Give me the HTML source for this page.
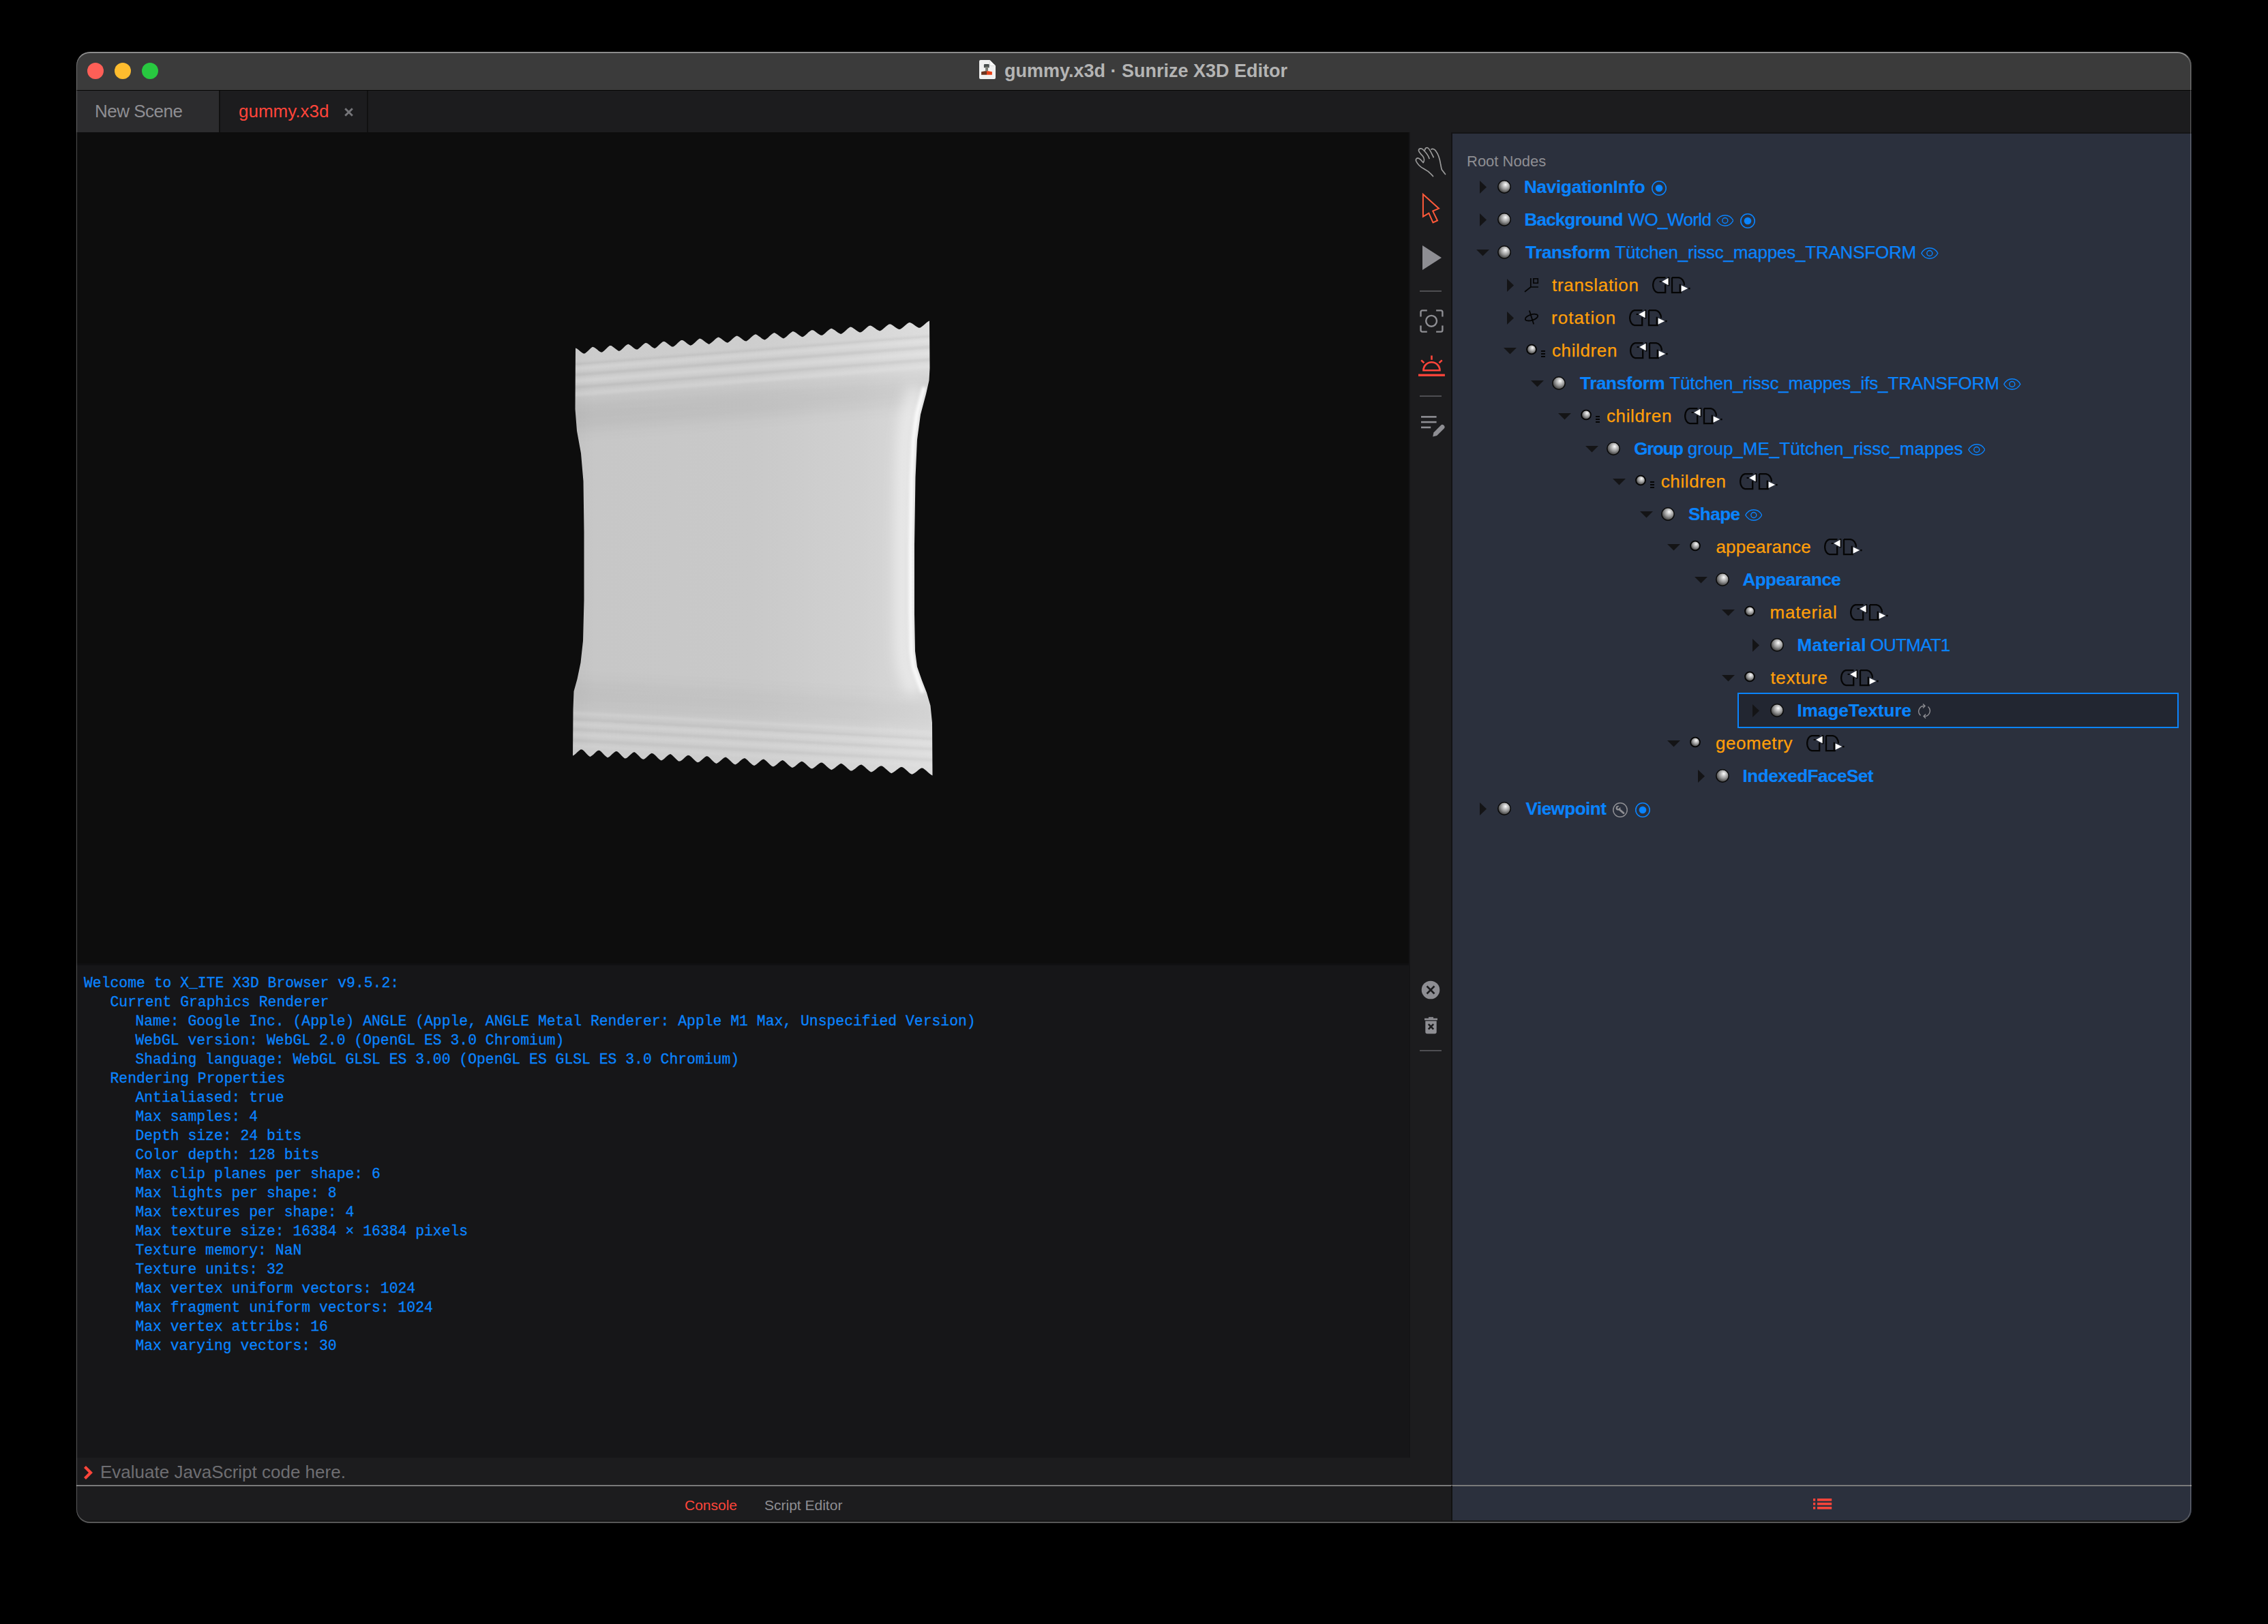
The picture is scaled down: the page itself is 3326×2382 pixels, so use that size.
<!DOCTYPE html>
<html><head><meta charset="utf-8">
<style>
html,body{margin:0;padding:0;background:#000;width:3326px;height:2382px;overflow:hidden;font-family:"Liberation Sans",sans-serif;}
.a{position:absolute;}
#win{position:absolute;left:112px;top:76px;width:3102px;height:2158px;border-radius:20px;overflow:hidden;background:#1c1c1e;}
#pg{position:absolute;left:-112px;top:-76px;width:3326px;height:2382px;}
#winborder{position:absolute;left:112px;top:76px;width:3099px;height:2153.5px;border-radius:20px;border:1.5px solid rgba(255,255,255,0.27);border-top:2px solid rgba(255,255,255,0.42);border-bottom:2px solid #575757;pointer-events:none;}
.mono{font-family:"Liberation Mono",monospace;font-size:21.4px;color:#0a84ff;white-space:pre;line-height:28px;-webkit-text-stroke:0.3px #0a84ff;}
.row{position:absolute;height:48px;white-space:nowrap;font-size:26px;line-height:48px;}
.ic{display:inline-block;}
.tn{color:#0a84ff;font-weight:bold;-webkit-text-stroke:0.2px #0a84ff;}
.nn{color:#0a84ff;-webkit-text-stroke:0.25px #0a84ff;}
.fn{color:#ff9f0a;-webkit-text-stroke:0.25px #ff9f0a;}
</style></head><body>
<svg width="0" height="0" style="position:absolute">
  <defs>
    <radialGradient id="bg" cx="0.58" cy="0.38" r="0.62" fx="0.6" fy="0.32">
      <stop offset="0" stop-color="#ffffff"/>
      <stop offset="0.18" stop-color="#dcdcdc"/>
      <stop offset="0.55" stop-color="#9a9a9a"/>
      <stop offset="0.85" stop-color="#5a5a5a"/>
      <stop offset="1" stop-color="#383838"/>
    </radialGradient>
    <linearGradient id="bag" x1="0" y1="0" x2="1" y2="0">
      <stop offset="0" stop-color="#c4c4c4"/>
      <stop offset="0.5" stop-color="#c9c9c9"/>
      <stop offset="0.9" stop-color="#d4d4d4"/>
      <stop offset="1" stop-color="#dcdcdc"/>
    </linearGradient>
  </defs>
</svg>
<div id="win"><div id="pg">
  <!-- title bar -->
  <div class="a" style="left:112px;top:76px;width:3102px;height:56px;background:#3b3b3b;"></div>
  <div class="a" style="left:128px;top:92px;width:24px;height:24px;border-radius:50%;background:#fe5f57;"></div>
  <div class="a" style="left:168px;top:92px;width:24px;height:24px;border-radius:50%;background:#febc2e;"></div>
  <div class="a" style="left:208px;top:92px;width:24px;height:24px;border-radius:50%;background:#28c840;"></div>
  <svg class="a" style="left:1436px;top:88px" width="24" height="28" viewBox="0 0 24 28">
    <path d="M2 0H15.4L24 8.6V26A2 2 0 0 1 22 28H2A2 2 0 0 1 0 26V2A2 2 0 0 1 2 0Z" fill="#f1f1f1"/>
    <path d="M15.4 0V6.6A2 2 0 0 0 17.4 8.6H24Z" fill="#fbfbfb"/><path d="M15.4 0.5V6.6A2 2 0 0 0 17.4 8.6H23.5" fill="none" stroke="#c8c8c8" stroke-width="0.6"/>
    <path d="M6.9 7.2Q6.9 6 8 6H13.6Q14.7 6 14.7 7.2V11.2H6.9Z" fill="#4b5050"/>
    <rect x="9.1" y="9.8" width="3.9" height="6.6" fill="#7e8079"/>
    <path d="M3.1 17.3L8.6 16.3H11V21.8H3.1Z" fill="#6b3520"/><path d="M11 16.3H13.4L18.9 17.3V21.8H11Z" fill="#e84118"/>
  </svg>
  <div class="a" style="left:1473px;top:76px;height:56px;line-height:56px;font-size:27px;font-weight:bold;color:#b4b4b4;white-space:nowrap;">gummy.x3d · Sunrize X3D Editor</div>
  <!-- tabs -->
  <div class="a" style="left:112px;top:132px;width:3102px;height:62px;background:#1c1c1e;border-top:1px solid #050505;box-sizing:border-box;"></div>
  <div class="a" style="left:112px;top:133px;width:209px;height:61px;background:#2c2c2e;"></div>
  <div class="a" style="left:321px;top:133px;width:2px;height:61px;background:#111;"></div>
  <div class="a" style="left:538px;top:133px;width:2px;height:61px;background:#111;"></div>
  <div class="a" style="left:139px;top:133px;line-height:61px;font-size:26px;color:#8e8e93;white-space:nowrap;letter-spacing:-0.5px;">New Scene</div>
  <div class="a" style="left:350px;top:133px;line-height:61px;font-size:26px;color:#ff453a;white-space:nowrap;">gummy.x3d</div>
  <svg class="a" style="left:505px;top:158px" width="13" height="13"><path d="M1.2 1.2L11.8 11.8M11.8 1.2L1.2 11.8" stroke="#757579" stroke-width="2.9"/></svg>
  <!-- viewport -->
  <div class="a" style="left:112px;top:194px;width:1954px;height:1219px;background:#0d0d0d;"></div>
  <svg class="a" style="left:0;top:0" width="3326" height="1413" viewBox="0 0 3326 1413">
<defs>
<clipPath id="bagclip"><path d="M844.0 510.5 L846.3 511.6 L848.6 513.2 L850.8 515.2 L853.1 517.0 L855.4 518.5 L857.7 518.5 L859.9 516.8 L862.2 514.7 L864.5 512.4 L866.8 510.3 L869.0 508.8 L871.3 509.4 L873.6 510.9 L875.9 512.8 L878.1 514.7 L880.4 516.2 L882.7 516.8 L885.0 515.3 L887.2 513.3 L889.5 511.0 L891.8 508.8 L894.1 507.1 L896.4 507.1 L898.6 508.4 L900.9 510.2 L903.2 512.1 L905.5 513.8 L907.7 515.0 L910.0 513.9 L912.3 512.0 L914.6 509.8 L916.8 507.6 L919.1 505.7 L921.4 504.7 L923.7 505.9 L925.9 507.5 L928.2 509.4 L930.5 511.2 L932.8 512.6 L935.1 512.5 L937.3 510.8 L939.6 508.7 L941.9 506.5 L944.2 504.4 L946.4 502.9 L948.7 503.2 L951.0 504.7 L953.3 506.5 L955.5 508.4 L957.8 510.0 L960.1 511.0 L962.4 509.7 L964.6 507.8 L966.9 505.6 L969.2 503.4 L971.5 501.6 L973.8 500.7 L976.0 501.8 L978.3 503.4 L980.6 505.3 L982.9 507.1 L985.1 508.4 L987.4 508.6 L989.7 507.0 L992.0 504.9 L994.2 502.7 L996.5 500.7 L998.8 499.0 L1001.1 499.0 L1003.3 500.3 L1005.6 502.1 L1007.9 503.9 L1010.2 505.5 L1012.4 506.7 L1014.7 506.1 L1017.0 504.3 L1019.3 502.2 L1021.6 500.0 L1023.8 498.1 L1026.1 496.6 L1028.4 497.2 L1030.7 498.7 L1032.9 500.5 L1035.2 502.3 L1037.5 503.8 L1039.8 504.9 L1042.0 503.6 L1044.3 501.8 L1046.6 499.7 L1048.9 497.5 L1051.1 495.7 L1053.4 494.4 L1055.7 495.4 L1058.0 496.9 L1060.2 498.7 L1062.5 500.5 L1064.8 501.9 L1067.1 502.7 L1069.4 501.3 L1071.6 499.4 L1073.9 497.3 L1076.2 495.2 L1078.5 493.4 L1080.7 492.4 L1083.0 493.4 L1085.3 495.0 L1087.6 496.8 L1089.8 498.5 L1092.1 499.9 L1094.4 500.6 L1096.7 499.1 L1098.9 497.3 L1101.2 495.1 L1103.5 493.0 L1105.8 491.3 L1108.1 490.3 L1110.3 491.3 L1112.6 492.9 L1114.9 494.6 L1117.2 496.4 L1119.4 497.8 L1121.7 498.5 L1124.0 497.1 L1126.3 495.3 L1128.5 493.1 L1130.8 491.1 L1133.1 489.3 L1135.4 488.1 L1137.6 489.1 L1139.9 490.6 L1142.2 492.3 L1144.5 494.1 L1146.8 495.5 L1149.0 496.5 L1151.3 495.2 L1153.6 493.4 L1155.9 491.3 L1158.1 489.2 L1160.4 487.4 L1162.7 486.0 L1165.0 486.7 L1167.2 488.1 L1169.5 489.8 L1171.8 491.6 L1174.1 493.1 L1176.3 494.2 L1178.6 493.4 L1180.9 491.7 L1183.2 489.7 L1185.4 487.6 L1187.7 485.7 L1190.0 484.2 L1192.3 484.3 L1194.6 485.5 L1196.8 487.2 L1199.1 488.9 L1201.4 490.5 L1203.7 491.7 L1205.9 491.7 L1208.2 490.2 L1210.5 488.2 L1212.8 486.1 L1215.0 484.2 L1217.3 482.5 L1219.6 481.8 L1221.9 482.9 L1224.1 484.3 L1226.4 486.1 L1228.7 487.7 L1231.0 489.1 L1233.2 490.0 L1235.5 488.7 L1237.8 486.9 L1240.1 484.9 L1242.4 482.8 L1244.6 481.0 L1246.9 479.6 L1249.2 480.1 L1251.5 481.4 L1253.7 483.0 L1256.0 484.8 L1258.3 486.3 L1260.6 487.4 L1262.8 487.2 L1265.1 485.7 L1267.4 483.8 L1269.7 481.7 L1271.9 479.7 L1274.2 478.1 L1276.5 477.4 L1278.8 478.4 L1281.1 479.9 L1283.3 481.6 L1285.6 483.2 L1287.9 484.6 L1290.2 485.6 L1292.4 484.4 L1294.7 482.8 L1297.0 480.8 L1299.3 478.7 L1301.5 476.9 L1303.8 475.4 L1306.1 475.5 L1308.4 476.7 L1310.6 478.2 L1312.9 479.9 L1315.2 481.5 L1317.5 482.7 L1319.8 483.1 L1322.0 481.8 L1324.3 480.0 L1326.6 478.0 L1328.9 476.0 L1331.1 474.2 L1333.4 472.9 L1335.7 473.5 L1338.0 474.8 L1340.2 476.3 L1342.5 478.0 L1344.8 479.5 L1347.1 480.7 L1349.3 480.7 L1351.6 479.2 L1353.9 477.4 L1356.2 475.4 L1358.4 473.4 L1360.7 471.7 L1363.0 470.5 L1363.5 540.0 L1362.5 558.0 L1358.0 578.0 L1350.0 608.0 L1345.0 645.0 L1342.5 700.0 L1341.0 800.0 L1341.0 900.0 L1342.0 955.0 L1345.0 978.0 L1352.0 998.0 L1359.0 1016.0 L1364.5 1035.0 L1367.0 1060.0 L1367.5 1137.5 L1365.2 1136.2 L1362.9 1134.5 L1360.6 1132.4 L1358.2 1130.3 L1355.9 1128.4 L1353.6 1126.8 L1351.3 1126.6 L1349.0 1127.8 L1346.7 1129.5 L1344.4 1131.4 L1342.1 1133.2 L1339.7 1134.7 L1337.4 1135.8 L1335.1 1134.7 L1332.8 1132.9 L1330.5 1130.8 L1328.2 1128.7 L1325.9 1126.7 L1323.5 1125.2 L1321.2 1124.9 L1318.9 1126.2 L1316.6 1127.9 L1314.3 1129.8 L1312.0 1131.6 L1309.7 1133.1 L1307.3 1134.2 L1305.0 1132.9 L1302.7 1131.1 L1300.4 1129.0 L1298.1 1126.9 L1295.8 1124.9 L1293.5 1123.4 L1291.2 1123.4 L1288.8 1124.8 L1286.5 1126.5 L1284.2 1128.4 L1281.9 1130.3 L1279.6 1131.7 L1277.3 1132.4 L1275.0 1131.0 L1272.6 1129.1 L1270.3 1126.9 L1268.0 1124.8 L1265.7 1122.9 L1263.4 1121.5 L1261.1 1122.1 L1258.8 1123.6 L1256.4 1125.4 L1254.1 1127.4 L1251.8 1129.1 L1249.5 1130.5 L1247.2 1130.4 L1244.9 1128.8 L1242.6 1126.8 L1240.3 1124.6 L1237.9 1122.4 L1235.6 1120.7 L1233.3 1119.8 L1231.0 1121.0 L1228.7 1122.7 L1226.4 1124.6 L1224.1 1126.5 L1221.7 1128.1 L1219.4 1129.3 L1217.1 1128.1 L1214.8 1126.3 L1212.5 1124.2 L1210.2 1122.0 L1207.9 1120.0 L1205.5 1118.4 L1203.2 1118.7 L1200.9 1120.2 L1198.6 1122.0 L1196.3 1124.0 L1194.0 1125.8 L1191.7 1127.2 L1189.4 1127.2 L1187.0 1125.6 L1184.7 1123.5 L1182.4 1121.3 L1180.1 1119.2 L1177.8 1117.4 L1175.5 1116.7 L1173.2 1118.0 L1170.8 1119.8 L1168.5 1121.7 L1166.2 1123.7 L1163.9 1125.3 L1161.6 1126.1 L1159.3 1124.6 L1157.0 1122.7 L1154.6 1120.4 L1152.3 1118.2 L1150.0 1116.3 L1147.7 1114.9 L1145.4 1116.1 L1143.1 1117.7 L1140.8 1119.7 L1138.5 1121.7 L1136.1 1123.4 L1133.8 1124.6 L1131.5 1123.4 L1129.2 1121.5 L1126.9 1119.3 L1124.6 1117.0 L1122.3 1115.0 L1119.9 1113.5 L1117.6 1114.3 L1115.3 1115.9 L1113.0 1117.9 L1110.7 1119.9 L1108.4 1121.7 L1106.1 1122.9 L1103.8 1122.0 L1101.4 1120.1 L1099.1 1117.9 L1096.8 1115.6 L1094.5 1113.6 L1092.2 1112.1 L1089.9 1112.7 L1087.6 1114.3 L1085.2 1116.3 L1082.9 1118.4 L1080.6 1120.2 L1078.3 1121.4 L1076.0 1120.4 L1073.7 1118.6 L1071.4 1116.3 L1069.0 1114.0 L1066.7 1112.0 L1064.4 1110.5 L1062.1 1111.3 L1059.8 1113.0 L1057.5 1115.0 L1055.2 1117.1 L1052.9 1118.8 L1050.5 1120.0 L1048.2 1118.7 L1045.9 1116.7 L1043.6 1114.4 L1041.3 1112.1 L1039.0 1110.1 L1036.7 1108.9 L1034.3 1110.1 L1032.0 1111.9 L1029.7 1114.0 L1027.4 1116.0 L1025.1 1117.7 L1022.8 1118.3 L1020.5 1116.8 L1018.1 1114.6 L1015.8 1112.3 L1013.5 1110.0 L1011.2 1108.2 L1008.9 1107.7 L1006.6 1109.1 L1004.3 1111.1 L1002.0 1113.2 L999.6 1115.2 L997.3 1116.6 L995.0 1116.4 L992.7 1114.5 L990.4 1112.3 L988.1 1109.9 L985.8 1107.7 L983.4 1106.1 L981.1 1106.8 L978.8 1108.4 L976.5 1110.5 L974.2 1112.7 L971.9 1114.4 L969.6 1115.6 L967.2 1114.1 L964.9 1112.0 L962.6 1109.6 L960.3 1107.3 L958.0 1105.4 L955.7 1104.7 L953.4 1106.1 L951.1 1108.1 L948.7 1110.3 L946.4 1112.3 L944.1 1113.8 L941.8 1113.3 L939.5 1111.5 L937.2 1109.1 L934.9 1106.7 L932.5 1104.6 L930.2 1103.0 L927.9 1104.1 L925.6 1105.9 L923.3 1108.1 L921.0 1110.2 L918.7 1111.9 L916.3 1112.4 L914.0 1110.7 L911.7 1108.4 L909.4 1105.9 L907.1 1103.7 L904.8 1101.9 L902.5 1102.3 L900.2 1104.0 L897.8 1106.1 L895.5 1108.3 L893.2 1110.2 L890.9 1111.2 L888.6 1109.6 L886.3 1107.4 L884.0 1104.9 L881.6 1102.6 L879.3 1100.7 L877.0 1100.7 L874.7 1102.3 L872.4 1104.5 L870.1 1106.7 L867.8 1108.6 L865.4 1109.9 L863.1 1108.4 L860.8 1106.2 L858.5 1103.7 L856.2 1101.3 L853.9 1099.4 L851.6 1099.2 L849.3 1100.9 L846.9 1103.0 L844.6 1105.3 L842.3 1107.2 L840.0 1108.5 L840.5 1040.0 L841.5 1014.0 L846.5 996.0 L851.5 972.0 L855.0 940.0 L856.5 880.0 L856.5 780.0 L855.5 706.0 L852.0 665.0 L846.0 632.0 L843.5 600.0 L844.0 510.5Z"/></clipPath>
<filter id="soft" filterUnits="userSpaceOnUse" x="800" y="440" width="620" height="740"><feGaussianBlur stdDeviation="0.7"/></filter>
<filter id="blur8" filterUnits="userSpaceOnUse" x="1200" y="500" width="250" height="600"><feGaussianBlur stdDeviation="9"/></filter>
<filter id="blur8b" filterUnits="userSpaceOnUse" x="800" y="440" width="620" height="740"><feGaussianBlur stdDeviation="10"/></filter>
<filter id="blur1" filterUnits="userSpaceOnUse" x="800" y="440" width="620" height="740"><feGaussianBlur stdDeviation="1.5"/></filter>
<filter id="blur2" filterUnits="userSpaceOnUse" x="800" y="440" width="620" height="740"><feGaussianBlur stdDeviation="2.2"/></filter>
<linearGradient id="bagh" x1="840" y1="0" x2="1368" y2="0" gradientUnits="userSpaceOnUse">
<stop offset="0" stop-color="#c2c2c2"/><stop offset="0.06" stop-color="#c7c7c7"/><stop offset="0.5" stop-color="#c9c9c9"/><stop offset="0.8" stop-color="#d1d1d1"/><stop offset="0.9" stop-color="#d6d6d6"/><stop offset="1" stop-color="#dadada"/>
</linearGradient>
<linearGradient id="bagv" x1="0" y1="470" x2="0" y2="1140" gradientUnits="userSpaceOnUse">
<stop offset="0" stop-color="#fff" stop-opacity="0.10"/>
<stop offset="0.12" stop-color="#fff" stop-opacity="0.08"/>
<stop offset="0.2" stop-color="#fff" stop-opacity="0"/>
<stop offset="0.8" stop-color="#fff" stop-opacity="0"/>
<stop offset="0.88" stop-color="#fff" stop-opacity="0.06"/>
<stop offset="1" stop-color="#fff" stop-opacity="0.10"/>
</linearGradient>
</defs>
<g clip-path="url(#bagclip)">
<g filter="url(#soft)">
<rect x="830" y="460" width="550" height="690" fill="url(#bagh)"/>
<rect x="830" y="460" width="550" height="690" fill="url(#bagv)"/>
<g fill="none" filter="url(#blur8b)"><path d="M830 610.9 L1378 567.9" stroke="#000" stroke-opacity="0.05" stroke-width="44"/><path d="M830 1019.2 L1378 1049.3" stroke="#000" stroke-opacity="0.035" stroke-width="44"/></g><g fill="none" filter="url(#blur1)"><path d="M830 535.4 L1378 492.4" stroke="#000" stroke-opacity="0.05" stroke-width="4"/><path d="M830 541.9 L1378 498.9" stroke="#fff" stroke-opacity="0.12" stroke-width="5"/><path d="M830 550.9 L1378 507.9" stroke="#000" stroke-opacity="0.06" stroke-width="4"/><path d="M830 559.9 L1378 516.9" stroke="#fff" stroke-opacity="0.14" stroke-width="6"/><path d="M830 569.4 L1378 526.4" stroke="#000" stroke-opacity="0.06" stroke-width="4"/><path d="M830 579.4 L1378 536.4" stroke="#fff" stroke-opacity="0.14" stroke-width="6"/><path d="M830 1045.2 L1378 1075.3" stroke="#fff" stroke-opacity="0.1" stroke-width="5"/><path d="M830 1054.2 L1378 1084.3" stroke="#000" stroke-opacity="0.04" stroke-width="4"/><path d="M830 1061.2 L1378 1091.3" stroke="#fff" stroke-opacity="0.1" stroke-width="5"/><path d="M830 1069.2 L1378 1099.3" stroke="#000" stroke-opacity="0.04" stroke-width="4"/><path d="M830 1076.7 L1378 1106.8" stroke="#fff" stroke-opacity="0.1" stroke-width="5"/><path d="M830 1085.2 L1378 1115.3" stroke="#000" stroke-opacity="0.04" stroke-width="4"/><path d="M830 1093.2 L1378 1123.3" stroke="#fff" stroke-opacity="0.08" stroke-width="5"/></g>
<path d="M1343.0 568.0 L1340.0 578.0 L1332.0 608.0 L1327.0 645.0 L1324.5 700.0 L1323.0 800.0 L1323.0 900.0 L1324.0 955.0 L1327.0 978.0 L1334.0 998.0 L1341.0 1016.0" stroke="#fff" stroke-opacity="0.45" stroke-width="24" fill="none" filter="url(#blur8)"/>
<path d="M1355.5 568.0 L1352.5 578.0 L1344.5 608.0 L1339.5 645.0 L1337.0 700.0 L1335.5 800.0 L1335.5 900.0 L1336.5 955.0 L1339.5 978.0 L1346.5 998.0 L1353.5 1016.0" stroke="#fff" stroke-opacity="1" stroke-width="5" fill="none" filter="url(#blur2)"/>
</g>
</g>
</svg>
  <!-- console -->
  <div class="a" style="left:112px;top:1413px;width:1954px;height:2.5px;background:#101012;"></div>
  <div class="a" style="left:112px;top:1415.5px;width:1954px;height:722.5px;background:#161618;"></div><div class="a" style="left:2066px;top:194px;width:2px;height:1944px;background:#141416;"></div>
  <div class="a mono" style="left:123px;top:1427.5px;">Welcome to X_ITE X3D Browser v9.5.2:
   Current Graphics Renderer
<span style="letter-spacing:-0.27px">      </span>Name: Google Inc. (Apple) ANGLE (Apple, ANGLE Metal Renderer: Apple M1 Max, Unspecified Version)
<span style="letter-spacing:-0.27px">      </span>WebGL version: WebGL 2.0 (OpenGL ES 3.0 Chromium)
<span style="letter-spacing:-0.27px">      </span>Shading language: WebGL GLSL ES 3.00 (OpenGL ES GLSL ES 3.0 Chromium)
   Rendering Properties
<span style="letter-spacing:-0.27px">      </span>Antialiased: true
<span style="letter-spacing:-0.27px">      </span>Max samples: 4
<span style="letter-spacing:-0.27px">      </span>Depth size: 24 bits
<span style="letter-spacing:-0.27px">      </span>Color depth: 128 bits
<span style="letter-spacing:-0.27px">      </span>Max clip planes per shape: 6
<span style="letter-spacing:-0.27px">      </span>Max lights per shape: 8
<span style="letter-spacing:-0.27px">      </span>Max textures per shape: 4
<span style="letter-spacing:-0.27px">      </span>Max texture size: 16384 × 16384 pixels
<span style="letter-spacing:-0.27px">      </span>Texture memory: NaN
<span style="letter-spacing:-0.27px">      </span>Texture units: 32
<span style="letter-spacing:-0.27px">      </span>Max vertex uniform vectors: 1024
<span style="letter-spacing:-0.27px">      </span>Max fragment uniform vectors: 1024
<span style="letter-spacing:-0.27px">      </span>Max vertex attribs: 16
<span style="letter-spacing:-0.27px">      </span>Max varying vectors: 30</div>
  <!-- input row -->
  <div class="a" style="left:112px;top:2138px;width:1956px;height:40px;background:#1c1c1e;"></div>
  <svg class="a" style="left:122px;top:2150px" width="14" height="20" viewBox="0 0 14 20"><path d="M2.5 1.5L11 10L2.5 18.5" fill="none" stroke="#ff453a" stroke-width="4.2"/></svg>
  <div class="a" style="left:147px;top:2138px;line-height:42px;font-size:26px;color:#6e6e72;white-space:nowrap;">Evaluate JavaScript code here.</div>
  <!-- toolbar -->
  <div class="a" style="left:2068px;top:194px;width:62px;height:1984px;background:#1c1c1e;"></div>
  
<svg class="a" style="left:2070px;top:210px" width="60" height="60" viewBox="0 0 60 60"><path d="M31.5 48.5C27 43 23 40 18 37.5C13 35 9 31 6.8 26.5C5.5 23 8 21 11 22.5C14 24 16 27.5 17.2 28.5C19 26 18.8 22 16.5 19C13.5 15.5 10 13 10.5 10C11 7.5 14.5 7 17 9.5C20 12.5 24.5 17 26 22.5M19.5 10C19.8 8 21 6.5 23 6.5C26 6.8 29 14 32.2 20.5M29 9C31 7.5 34 9 36 12C39 16 41.5 24 42.5 30C43.3 34 43.5 37 44.5 39L49.5 45.5" fill="none" stroke="#9c9c9c" stroke-width="1.7" stroke-linecap="round" stroke-linejoin="round"/></svg>
<svg class="a" style="left:2070px;top:270px" width="60" height="70" viewBox="0 0 60 70"><path d="M16.9 15V47.7L25.4 42.7L31.5 56.5L38 53.5L31.2 39.6L40 35.8Z" fill="none" stroke="#ff5a3a" stroke-width="2" stroke-linejoin="miter"/></svg>
<svg class="a" style="left:2085px;top:359px" width="30" height="38" viewBox="0 0 30 38"><path d="M1 1L29 19L1 37Z" fill="#8e8e93"/></svg>
<div class="a" style="left:2082px;top:426px;width:32px;height:2px;background:#4e4e52"></div>
<svg class="a" style="left:2070px;top:440px" width="60" height="60" viewBox="0 0 60 60"><path d="M13.5 24.5V17.8Q13.5 15.4 15.9 15.4H22.8M36.1 15.4H43Q45.4 15.4 45.4 17.8V24.5M45.4 37.5V44.2Q45.4 46.6 43 46.6H36.1M22.8 46.6H15.9Q13.5 46.6 13.5 44.2V37.5" fill="none" stroke="#8e8e93" stroke-width="2.4"/><circle cx="29.1" cy="30.8" r="7.9" fill="none" stroke="#8e8e93" stroke-width="2.4"/></svg>
<svg class="a" style="left:2070px;top:515px" width="60" height="45" viewBox="0 75 60 45"><path d="M17.45 103.2A12 12 0 0 1 41.45 103.2Z" fill="none" stroke="#ff453a" stroke-width="2.6"/><rect x="10" y="108.6" width="38.9" height="3.3" fill="#ff453a"/><path d="M29.5 81.5V87.7M14.2 88.4L18.4 92.3M44.7 88.4L40.5 92.3" stroke="#ff453a" stroke-width="2.6"/></svg>
<div class="a" style="left:2082px;top:580px;width:32px;height:2px;background:#4e4e52"></div><div class="a" style="left:2128px;top:194px;width:2px;height:1984px;background:#121214"></div>
<svg class="a" style="left:2070px;top:605px" width="60" height="45" viewBox="0 165 60 45"><rect x="14" y="170.1" width="22.6" height="2.6" fill="#8e8e93"/><rect x="14" y="177.8" width="22.6" height="2.6" fill="#8e8e93"/><rect x="14" y="185.6" width="14.2" height="2.6" fill="#8e8e93"/><path d="M31.2 200.6L32.4 194.4L42.8 184A3.3 3.3 0 0 1 47.5 188.7L37.1 199.1Z" fill="#8e8e93"/></svg>
<svg class="a" style="left:2084px;top:1438px" width="28" height="28" viewBox="0 0 28 28"><circle cx="14" cy="14" r="13.3" fill="#8e8e93"/><path d="M8.5 8.5L19.5 19.5M19.5 8.5L8.5 19.5" stroke="#1c1c1e" stroke-width="2.6"/></svg>
<svg class="a" style="left:2089px;top:1491px" width="19" height="26" viewBox="0 0 19 26"><path d="M0 2.6H19V5.3H0Z" fill="#8e8e93"/><path d="M6 0.8H13V2.8H6Z" fill="#8e8e93"/><path d="M1.3 6.4H17.7V22.5A2.8 2.8 0 0 1 14.9 25.3H4.1A2.8 2.8 0 0 1 1.3 22.5Z" fill="#8e8e93"/><path d="M5.8 11.2L13.2 18.6M13.2 11.2L5.8 18.6" stroke="#1c1c1e" stroke-width="2.6"/></svg>
<div class="a" style="left:2082px;top:1540px;width:32px;height:2px;background:#4e4e52"></div>

  <!-- tree panel -->
  <div class="a" style="left:2130px;top:194px;width:1084px;height:2px;background:#141416;"></div><div class="a" style="left:2130px;top:196px;width:1084px;height:1982px;background:#2b303d;"></div>
  <div class="a" style="left:2151px;top:222px;line-height:30px;font-size:22px;color:#8e8e93;white-space:nowrap;">Root Nodes</div>
  <svg class="a" style="left:2170px;top:264.5px" width="10" height="19"><path d="M0 0L10 9.5L0 19Z" fill="#141416"/></svg>
<svg class="a" style="left:2196px;top:264.0px" width="20" height="20" viewBox="0 0 20 20"><circle cx="10" cy="10" r="9.2" fill="url(#bg)" stroke="#0a0a0a" stroke-width="1.5"/></svg>
<div class="row tn" style="left:2235.00px;top:250px;letter-spacing:-0.231px">NavigationInfo</div>
<svg class="a" style="left:2422px;top:264.5px" width="22" height="22" viewBox="0 0 22 22"><circle cx="11" cy="11" r="10.2" fill="none" stroke="#0a84ff" stroke-width="1.6"/><circle cx="11" cy="11" r="5.3" fill="#0a84ff"/></svg>
<svg class="a" style="left:2170px;top:312.5px" width="10" height="19"><path d="M0 0L10 9.5L0 19Z" fill="#141416"/></svg>
<svg class="a" style="left:2196px;top:312.0px" width="20" height="20" viewBox="0 0 20 20"><circle cx="10" cy="10" r="9.2" fill="url(#bg)" stroke="#0a0a0a" stroke-width="1.5"/></svg>
<div class="row tn" style="left:2235.40px;top:298px;letter-spacing:-0.744px">Background</div>
<div class="row nn" style="left:2387.50px;top:298px;letter-spacing:-0.600px">WO_World</div>
<svg class="a" style="left:2516.7999999999997px;top:314.5px" width="25.6" height="17" viewBox="0 0 25.6 17"><path d="M0.8 8.5C4 2.6 8 0.8 12.8 0.8S21.6 2.6 24.8 8.5C21.6 14.4 17.6 16.2 12.8 16.2S4 14.4 0.8 8.5Z" fill="none" stroke="#0a84ff" stroke-width="1.4"/><circle cx="12.8" cy="8.5" r="4" fill="none" stroke="#0a84ff" stroke-width="1.4"/></svg>
<svg class="a" style="left:2552px;top:312.5px" width="22" height="22" viewBox="0 0 22 22"><circle cx="11" cy="11" r="10.2" fill="none" stroke="#0a84ff" stroke-width="1.6"/><circle cx="11" cy="11" r="5.3" fill="#0a84ff"/></svg>
<svg class="a" style="left:2165px;top:365.5px" width="19" height="10"><path d="M0 0H19L9.5 9.5Z" fill="#141416"/></svg>
<svg class="a" style="left:2196px;top:360.0px" width="20" height="20" viewBox="0 0 20 20"><circle cx="10" cy="10" r="9.2" fill="url(#bg)" stroke="#0a0a0a" stroke-width="1.5"/></svg>
<div class="row tn" style="left:2237.00px;top:346px;letter-spacing:-0.312px">Transform</div>
<div class="row nn" style="left:2368.30px;top:346px;letter-spacing:-0.207px">Tütchen_rissc_mappes_TRANSFORM</div>
<svg class="a" style="left:2817.0px;top:362.5px" width="25.6" height="17" viewBox="0 0 25.6 17"><path d="M0.8 8.5C4 2.6 8 0.8 12.8 0.8S21.6 2.6 24.8 8.5C21.6 14.4 17.6 16.2 12.8 16.2S4 14.4 0.8 8.5Z" fill="none" stroke="#0a84ff" stroke-width="1.4"/><circle cx="12.8" cy="8.5" r="4" fill="none" stroke="#0a84ff" stroke-width="1.4"/></svg>
<svg class="a" style="left:2210px;top:408.5px" width="10" height="19"><path d="M0 0L10 9.5L0 19Z" fill="#141416"/></svg>
<svg class="a" style="left:2235px;top:407px" width="22" height="22" viewBox="0 0 22 22"><path d="M9.8 1V14H21M9.8 14L1 21" fill="none" stroke="#050505" stroke-width="1.7"/><rect x="13.9" y="1.8" width="6.4" height="6.4" fill="none" stroke="#050505" stroke-width="1.6"/></svg>
<div class="row fn" style="left:2276.00px;top:394px;letter-spacing:0.700px">translation</div>
<svg class="a" style="left:2423.0px;top:406px" width="57" height="25" viewBox="0 0 57 25"><g fill="none" stroke="#050505" stroke-width="2.3"><path d="M19.5 1.1H8A7.6 11.1 0 0 0 8 23.2H19.2V11.3"/><path d="M24 0.2V13.4" stroke-width="2.6"/><path d="M29 1.1V23.2H42.8M29 1.1H38.3A8.8 11.4 0 0 1 47 12.5"/><path d="M40.8 10.7V23.2"/></g><path d="M23.6 1.7L14.2 7L23.6 12.2Z" fill="#fff"/><path d="M10.6 6H13.6V8H10.6Z" fill="#050505"/><path d="M42.6 12.5L52.2 17L42.6 21.8Z" fill="#fff"/><rect x="53.2" y="15.9" width="2.4" height="2.4" fill="#050505"/></svg>
<svg class="a" style="left:2210px;top:456.5px" width="10" height="19"><path d="M0 0L10 9.5L0 19Z" fill="#141416"/></svg>
<svg class="a" style="left:2235px;top:455px" width="22" height="22" viewBox="0 0 22 22"><ellipse cx="11" cy="10.6" rx="9.6" ry="4.2" transform="rotate(-17 11 10.6)" fill="none" stroke="#050505" stroke-width="1.8"/><path d="M7.8 0.5L14.2 20.5" stroke="#050505" stroke-width="1.8"/></svg>
<div class="row fn" style="left:2275.00px;top:442px;letter-spacing:1.071px">rotation</div>
<svg class="a" style="left:2388.5px;top:454px" width="57" height="25" viewBox="0 0 57 25"><g fill="none" stroke="#050505" stroke-width="2.3"><path d="M19.5 1.1H8A7.6 11.1 0 0 0 8 23.2H19.2V11.3"/><path d="M24 0.2V13.4" stroke-width="2.6"/><path d="M29 1.1V23.2H42.8M29 1.1H38.3A8.8 11.4 0 0 1 47 12.5"/><path d="M40.8 10.7V23.2"/></g><path d="M23.6 1.7L14.2 7L23.6 12.2Z" fill="#fff"/><path d="M10.6 6H13.6V8H10.6Z" fill="#050505"/><path d="M42.6 12.5L52.2 17L42.6 21.8Z" fill="#fff"/><rect x="53.2" y="15.9" width="2.4" height="2.4" fill="#050505"/></svg>
<svg class="a" style="left:2205px;top:509.5px" width="19" height="10"><path d="M0 0H19L9.5 9.5Z" fill="#141416"/></svg>
<svg class="a" style="left:2236px;top:502px" width="32" height="22" viewBox="0 0 32 22"><circle cx="10" cy="10.5" r="6.9" fill="url(#bg)" stroke="#050505" stroke-width="1.9"/><rect x="24" y="12" width="6" height="2" fill="#050505"/><rect x="24" y="16" width="6" height="2" fill="#050505"/><rect x="24" y="20" width="6" height="2" fill="#050505"/></svg>
<div class="row fn" style="left:2276.00px;top:490px;letter-spacing:0.614px">children</div>
<svg class="a" style="left:2390.3px;top:502px" width="57" height="25" viewBox="0 0 57 25"><g fill="none" stroke="#050505" stroke-width="2.3"><path d="M19.5 1.1H8A7.6 11.1 0 0 0 8 23.2H19.2V11.3"/><path d="M24 0.2V13.4" stroke-width="2.6"/><path d="M29 1.1V23.2H42.8M29 1.1H38.3A8.8 11.4 0 0 1 47 12.5"/><path d="M40.8 10.7V23.2"/></g><path d="M23.6 1.7L14.2 7L23.6 12.2Z" fill="#fff"/><path d="M10.6 6H13.6V8H10.6Z" fill="#050505"/><path d="M42.6 12.5L52.2 17L42.6 21.8Z" fill="#fff"/><rect x="53.2" y="15.9" width="2.4" height="2.4" fill="#050505"/></svg>
<svg class="a" style="left:2245px;top:557.5px" width="19" height="10"><path d="M0 0H19L9.5 9.5Z" fill="#141416"/></svg>
<svg class="a" style="left:2276px;top:552.0px" width="20" height="20" viewBox="0 0 20 20"><circle cx="10" cy="10" r="9.2" fill="url(#bg)" stroke="#0a0a0a" stroke-width="1.5"/></svg>
<div class="row tn" style="left:2317.00px;top:538px;letter-spacing:-0.312px">Transform</div>
<div class="row nn" style="left:2448.30px;top:538px;letter-spacing:-0.145px">Tütchen_rissc_mappes_ifs_TRANSFORM</div>
<svg class="a" style="left:2938.2px;top:554.5px" width="25.6" height="17" viewBox="0 0 25.6 17"><path d="M0.8 8.5C4 2.6 8 0.8 12.8 0.8S21.6 2.6 24.8 8.5C21.6 14.4 17.6 16.2 12.8 16.2S4 14.4 0.8 8.5Z" fill="none" stroke="#0a84ff" stroke-width="1.4"/><circle cx="12.8" cy="8.5" r="4" fill="none" stroke="#0a84ff" stroke-width="1.4"/></svg>
<svg class="a" style="left:2285px;top:605.5px" width="19" height="10"><path d="M0 0H19L9.5 9.5Z" fill="#141416"/></svg>
<svg class="a" style="left:2316px;top:598px" width="32" height="22" viewBox="0 0 32 22"><circle cx="10" cy="10.5" r="6.9" fill="url(#bg)" stroke="#050505" stroke-width="1.9"/><rect x="24" y="12" width="6" height="2" fill="#050505"/><rect x="24" y="16" width="6" height="2" fill="#050505"/><rect x="24" y="20" width="6" height="2" fill="#050505"/></svg>
<div class="row fn" style="left:2356.00px;top:586px;letter-spacing:0.614px">children</div>
<svg class="a" style="left:2470.3px;top:598px" width="57" height="25" viewBox="0 0 57 25"><g fill="none" stroke="#050505" stroke-width="2.3"><path d="M19.5 1.1H8A7.6 11.1 0 0 0 8 23.2H19.2V11.3"/><path d="M24 0.2V13.4" stroke-width="2.6"/><path d="M29 1.1V23.2H42.8M29 1.1H38.3A8.8 11.4 0 0 1 47 12.5"/><path d="M40.8 10.7V23.2"/></g><path d="M23.6 1.7L14.2 7L23.6 12.2Z" fill="#fff"/><path d="M10.6 6H13.6V8H10.6Z" fill="#050505"/><path d="M42.6 12.5L52.2 17L42.6 21.8Z" fill="#fff"/><rect x="53.2" y="15.9" width="2.4" height="2.4" fill="#050505"/></svg>
<svg class="a" style="left:2325px;top:653.5px" width="19" height="10"><path d="M0 0H19L9.5 9.5Z" fill="#141416"/></svg>
<svg class="a" style="left:2356px;top:648.0px" width="20" height="20" viewBox="0 0 20 20"><circle cx="10" cy="10" r="9.2" fill="url(#bg)" stroke="#0a0a0a" stroke-width="1.5"/></svg>
<div class="row tn" style="left:2396.30px;top:634px;letter-spacing:-1.375px">Group</div>
<div class="row nn" style="left:2474.80px;top:634px;letter-spacing:0.014px">group_ME_Tütchen_rissc_mappes</div>
<svg class="a" style="left:2885.7px;top:650.5px" width="25.6" height="17" viewBox="0 0 25.6 17"><path d="M0.8 8.5C4 2.6 8 0.8 12.8 0.8S21.6 2.6 24.8 8.5C21.6 14.4 17.6 16.2 12.8 16.2S4 14.4 0.8 8.5Z" fill="none" stroke="#0a84ff" stroke-width="1.4"/><circle cx="12.8" cy="8.5" r="4" fill="none" stroke="#0a84ff" stroke-width="1.4"/></svg>
<svg class="a" style="left:2365px;top:701.5px" width="19" height="10"><path d="M0 0H19L9.5 9.5Z" fill="#141416"/></svg>
<svg class="a" style="left:2396px;top:694px" width="32" height="22" viewBox="0 0 32 22"><circle cx="10" cy="10.5" r="6.9" fill="url(#bg)" stroke="#050505" stroke-width="1.9"/><rect x="24" y="12" width="6" height="2" fill="#050505"/><rect x="24" y="16" width="6" height="2" fill="#050505"/><rect x="24" y="20" width="6" height="2" fill="#050505"/></svg>
<div class="row fn" style="left:2435.70px;top:682px;letter-spacing:0.614px">children</div>
<svg class="a" style="left:2550.5px;top:694px" width="57" height="25" viewBox="0 0 57 25"><g fill="none" stroke="#050505" stroke-width="2.3"><path d="M19.5 1.1H8A7.6 11.1 0 0 0 8 23.2H19.2V11.3"/><path d="M24 0.2V13.4" stroke-width="2.6"/><path d="M29 1.1V23.2H42.8M29 1.1H38.3A8.8 11.4 0 0 1 47 12.5"/><path d="M40.8 10.7V23.2"/></g><path d="M23.6 1.7L14.2 7L23.6 12.2Z" fill="#fff"/><path d="M10.6 6H13.6V8H10.6Z" fill="#050505"/><path d="M42.6 12.5L52.2 17L42.6 21.8Z" fill="#fff"/><rect x="53.2" y="15.9" width="2.4" height="2.4" fill="#050505"/></svg>
<svg class="a" style="left:2405px;top:749.5px" width="19" height="10"><path d="M0 0H19L9.5 9.5Z" fill="#141416"/></svg>
<svg class="a" style="left:2436px;top:744.0px" width="20" height="20" viewBox="0 0 20 20"><circle cx="10" cy="10" r="9.2" fill="url(#bg)" stroke="#0a0a0a" stroke-width="1.5"/></svg>
<div class="row tn" style="left:2476.00px;top:730px;letter-spacing:-0.500px">Shape</div>
<svg class="a" style="left:2558.6px;top:746.5px" width="25.6" height="17" viewBox="0 0 25.6 17"><path d="M0.8 8.5C4 2.6 8 0.8 12.8 0.8S21.6 2.6 24.8 8.5C21.6 14.4 17.6 16.2 12.8 16.2S4 14.4 0.8 8.5Z" fill="none" stroke="#0a84ff" stroke-width="1.4"/><circle cx="12.8" cy="8.5" r="4" fill="none" stroke="#0a84ff" stroke-width="1.4"/></svg>
<svg class="a" style="left:2445px;top:797.5px" width="19" height="10"><path d="M0 0H19L9.5 9.5Z" fill="#141416"/></svg>
<svg class="a" style="left:2476px;top:790px" width="32" height="22" viewBox="0 0 32 22"><circle cx="10" cy="10.5" r="6.9" fill="url(#bg)" stroke="#050505" stroke-width="1.9"/></svg>
<div class="row fn" style="left:2516.40px;top:778px;letter-spacing:0.211px">appearance</div>
<svg class="a" style="left:2674.5px;top:790px" width="57" height="25" viewBox="0 0 57 25"><g fill="none" stroke="#050505" stroke-width="2.3"><path d="M19.5 1.1H8A7.6 11.1 0 0 0 8 23.2H19.2V11.3"/><path d="M24 0.2V13.4" stroke-width="2.6"/><path d="M29 1.1V23.2H42.8M29 1.1H38.3A8.8 11.4 0 0 1 47 12.5"/><path d="M40.8 10.7V23.2"/></g><path d="M23.6 1.7L14.2 7L23.6 12.2Z" fill="#fff"/><path d="M10.6 6H13.6V8H10.6Z" fill="#050505"/><path d="M42.6 12.5L52.2 17L42.6 21.8Z" fill="#fff"/><rect x="53.2" y="15.9" width="2.4" height="2.4" fill="#050505"/></svg>
<svg class="a" style="left:2485px;top:845.5px" width="19" height="10"><path d="M0 0H19L9.5 9.5Z" fill="#141416"/></svg>
<svg class="a" style="left:2516px;top:840.0px" width="20" height="20" viewBox="0 0 20 20"><circle cx="10" cy="10" r="9.2" fill="url(#bg)" stroke="#0a0a0a" stroke-width="1.5"/></svg>
<div class="row tn" style="left:2555.40px;top:826px;letter-spacing:-0.489px">Appearance</div>
<svg class="a" style="left:2525px;top:893.5px" width="19" height="10"><path d="M0 0H19L9.5 9.5Z" fill="#141416"/></svg>
<svg class="a" style="left:2556px;top:886px" width="32" height="22" viewBox="0 0 32 22"><circle cx="10" cy="10.5" r="6.9" fill="url(#bg)" stroke="#050505" stroke-width="1.9"/></svg>
<div class="row fn" style="left:2595.50px;top:874px;letter-spacing:0.814px">material</div>
<svg class="a" style="left:2712.5px;top:886px" width="57" height="25" viewBox="0 0 57 25"><g fill="none" stroke="#050505" stroke-width="2.3"><path d="M19.5 1.1H8A7.6 11.1 0 0 0 8 23.2H19.2V11.3"/><path d="M24 0.2V13.4" stroke-width="2.6"/><path d="M29 1.1V23.2H42.8M29 1.1H38.3A8.8 11.4 0 0 1 47 12.5"/><path d="M40.8 10.7V23.2"/></g><path d="M23.6 1.7L14.2 7L23.6 12.2Z" fill="#fff"/><path d="M10.6 6H13.6V8H10.6Z" fill="#050505"/><path d="M42.6 12.5L52.2 17L42.6 21.8Z" fill="#fff"/><rect x="53.2" y="15.9" width="2.4" height="2.4" fill="#050505"/></svg>
<svg class="a" style="left:2570px;top:936.5px" width="10" height="19"><path d="M0 0L10 9.5L0 19Z" fill="#141416"/></svg>
<svg class="a" style="left:2596px;top:936.0px" width="20" height="20" viewBox="0 0 20 20"><circle cx="10" cy="10" r="9.2" fill="url(#bg)" stroke="#0a0a0a" stroke-width="1.5"/></svg>
<div class="row tn" style="left:2635.60px;top:922px;letter-spacing:0.371px">Material</div>
<div class="row nn" style="left:2742.40px;top:922px;letter-spacing:-0.733px">OUTMAT1</div>
<svg class="a" style="left:2525px;top:989.5px" width="19" height="10"><path d="M0 0H19L9.5 9.5Z" fill="#141416"/></svg>
<svg class="a" style="left:2556px;top:982px" width="32" height="22" viewBox="0 0 32 22"><circle cx="10" cy="10.5" r="6.9" fill="url(#bg)" stroke="#050505" stroke-width="1.9"/></svg>
<div class="row fn" style="left:2596.40px;top:970px;letter-spacing:0.667px">texture</div>
<svg class="a" style="left:2698.7px;top:982px" width="57" height="25" viewBox="0 0 57 25"><g fill="none" stroke="#050505" stroke-width="2.3"><path d="M19.5 1.1H8A7.6 11.1 0 0 0 8 23.2H19.2V11.3"/><path d="M24 0.2V13.4" stroke-width="2.6"/><path d="M29 1.1V23.2H42.8M29 1.1H38.3A8.8 11.4 0 0 1 47 12.5"/><path d="M40.8 10.7V23.2"/></g><path d="M23.6 1.7L14.2 7L23.6 12.2Z" fill="#fff"/><path d="M10.6 6H13.6V8H10.6Z" fill="#050505"/><path d="M42.6 12.5L52.2 17L42.6 21.8Z" fill="#fff"/><rect x="53.2" y="15.9" width="2.4" height="2.4" fill="#050505"/></svg>
<div class="a" style="left:2548px;top:1016px;width:647px;height:52px;box-sizing:border-box;border:2.4px solid #0a84ff;background:#222631;"></div>
<svg class="a" style="left:2570px;top:1032.5px" width="10" height="19"><path d="M0 0L10 9.5L0 19Z" fill="#141416"/></svg>
<svg class="a" style="left:2596px;top:1032.0px" width="20" height="20" viewBox="0 0 20 20"><circle cx="10" cy="10" r="9.2" fill="url(#bg)" stroke="#0a0a0a" stroke-width="1.5"/></svg>
<div class="row tn" style="left:2635.50px;top:1018px;letter-spacing:0.036px">ImageTexture</div>
<svg class="a" style="left:2812px;top:1030px" width="20" height="26" viewBox="0 0 20 26"><path d="M4.5 19.5A8 8 0 0 1 10.5 5.5M15.5 6.5A8 8 0 0 1 9.5 20.5" fill="none" stroke="#8e8e93" stroke-width="1.4"/><path d="M8 2.5L11 5.5L8 8.5M12 17.5L9 20.5L12 23.5" fill="none" stroke="#8e8e93" stroke-width="1.4"/></svg>
<svg class="a" style="left:2445px;top:1085.5px" width="19" height="10"><path d="M0 0H19L9.5 9.5Z" fill="#141416"/></svg>
<svg class="a" style="left:2476px;top:1078px" width="32" height="22" viewBox="0 0 32 22"><circle cx="10" cy="10.5" r="6.9" fill="url(#bg)" stroke="#050505" stroke-width="1.9"/></svg>
<div class="row fn" style="left:2516.00px;top:1066px;letter-spacing:0.571px">geometry</div>
<svg class="a" style="left:2648.8px;top:1078px" width="57" height="25" viewBox="0 0 57 25"><g fill="none" stroke="#050505" stroke-width="2.3"><path d="M19.5 1.1H8A7.6 11.1 0 0 0 8 23.2H19.2V11.3"/><path d="M24 0.2V13.4" stroke-width="2.6"/><path d="M29 1.1V23.2H42.8M29 1.1H38.3A8.8 11.4 0 0 1 47 12.5"/><path d="M40.8 10.7V23.2"/></g><path d="M23.6 1.7L14.2 7L23.6 12.2Z" fill="#fff"/><path d="M10.6 6H13.6V8H10.6Z" fill="#050505"/><path d="M42.6 12.5L52.2 17L42.6 21.8Z" fill="#fff"/><rect x="53.2" y="15.9" width="2.4" height="2.4" fill="#050505"/></svg>
<svg class="a" style="left:2490px;top:1128.5px" width="10" height="19"><path d="M0 0L10 9.5L0 19Z" fill="#141416"/></svg>
<svg class="a" style="left:2516px;top:1128.0px" width="20" height="20" viewBox="0 0 20 20"><circle cx="10" cy="10" r="9.2" fill="url(#bg)" stroke="#0a0a0a" stroke-width="1.5"/></svg>
<div class="row tn" style="left:2555.60px;top:1114px;letter-spacing:-0.469px">IndexedFaceSet</div>
<svg class="a" style="left:2170px;top:1176.5px" width="10" height="19"><path d="M0 0L10 9.5L0 19Z" fill="#141416"/></svg>
<svg class="a" style="left:2196px;top:1176.0px" width="20" height="20" viewBox="0 0 20 20"><circle cx="10" cy="10" r="9.2" fill="url(#bg)" stroke="#0a0a0a" stroke-width="1.5"/></svg>
<div class="row tn" style="left:2237.60px;top:1162px;letter-spacing:-0.512px">Viewpoint</div>
<svg class="a" style="left:2365px;top:1176.5px" width="22" height="22" viewBox="0 0 22 22"><circle cx="11" cy="11" r="10.2" fill="none" stroke="#8e8e93" stroke-width="1.5"/><path d="M8.6 9.2L16 15.6" stroke="#8e8e93" stroke-width="2.8" stroke-linecap="round"/><circle cx="8" cy="8.2" r="3.4" fill="#8e8e93"/><path d="M8.1 8.1L11.6 4.6" stroke="#2b303d" stroke-width="2.3"/><circle cx="8" cy="8.2" r="1.1" fill="#2b303d"/></svg>
<svg class="a" style="left:2398px;top:1176.5px" width="22" height="22" viewBox="0 0 22 22"><circle cx="11" cy="11" r="10.2" fill="none" stroke="#0a84ff" stroke-width="1.6"/><circle cx="11" cy="11" r="5.3" fill="#0a84ff"/></svg>
  <!-- footer -->
  <div class="a" style="left:112px;top:2178px;width:2018px;height:55px;background:#1c1c1e;"></div>
  <div class="a" style="left:2130px;top:2178px;width:1084px;height:55px;background:#2b303d;"></div>
  <div class="a" style="left:112px;top:2178px;width:3102px;height:1.6px;background:#7a7a7a;"></div><div class="a" style="left:112px;top:2229.5px;width:3102px;height:2.5px;background:#161616;"></div>
  <div class="a" style="left:2128px;top:2179px;width:2px;height:54px;background:#111;"></div>
  <div class="a" style="left:1004px;top:2181.5px;line-height:52px;font-size:21px;color:#ff453a;white-space:nowrap;">Console</div>
  <div class="a" style="left:1121px;top:2181.5px;line-height:52px;font-size:21px;color:#8e8e93;white-space:nowrap;">Script Editor</div>
  <svg class="a" style="left:2658.8px;top:2198.2px" width="28" height="16" viewBox="0 0 28 16"><g fill="#ff453a"><rect x="0" y="0" width="3.2" height="3.6"/><rect x="0" y="6" width="3.2" height="3.6"/><rect x="0" y="12" width="3.2" height="3.6"/><rect x="6" y="0" width="21.2" height="3.6"/><rect x="6" y="6" width="21.2" height="3.6"/><rect x="6" y="12" width="21.2" height="3.6"/></g></svg>
</div></div>
<div id="winborder"></div>
</body></html>
